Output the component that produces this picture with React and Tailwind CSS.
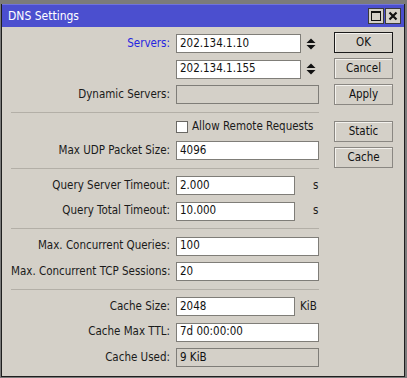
import React from "react";

const font = { fontFamily: '"DejaVu Sans Condensed", "DejaVu Sans", sans-serif' };

const Spin = () => (
   <svg width="10" height="12" viewBox="0 0 10 12" className="ml-[5px] shrink-0">
      <polygon points="0.5,5 5,0.5 9.5,5" fill="#111" />
      <polygon points="0.5,7 5,11.5 9.5,7" fill="#111" />
   </svg>
);

const Input = ({ value = "", w = "w-full", disabled = false }) => (
   <div
      className={`${w} h-[19px] border border-[#7f7d78] px-[3px] flex items-center text-[11.5px] text-[#111] leading-none ${
         disabled ? "bg-[#d4d0c8]" : "bg-white"
      }`}
   >
      {value}
   </div>
);

const Row = ({ label, blue = false, children }) => (
   <div className="grid grid-cols-[159px_1fr] gap-x-[6px] items-center h-[19px]">
      <span className={`text-right text-[11.5px] whitespace-nowrap ${blue ? "text-[#2525e0]" : "text-[#1a1a1a]"}`}>
         {label}
      </span>
      <div className="flex items-center">{children}</div>
   </div>
);

const Sep = () => <div className="h-px bg-[#b3afa7] my-[7.5px]" />;

const Button = ({ children, primary = false }) => (
   <div
      className={`h-[21px] flex items-center justify-center text-[11.5px] text-[#111] bg-[#d4d0c8] border ${
         primary ? "border-[#1a1a1a]" : "border-[#8a8782]"
      } shadow-[inset_1px_1px_0_#f4f2ee]`}
   >
      {children}
   </div>
);

export default function App() {
   return (
      <div className="w-[407px] h-[378px] bg-[#7b7b7b] pt-[4px] pl-[1px]" style={font}>
         <div className="w-[404px] h-[373px] bg-[#d4d0c8] border-l border-b border-r border-[#1e1e1e] flex flex-col">
            {/* Title bar */}
            <div className="h-[23px] bg-[#4b4fcf] flex items-center pl-[6px] pr-[3px] border-t border-[#6e72dc]">
               <span className="text-white text-[12px]">DNS Settings</span>
               <div className="ml-auto flex gap-px">
                  <div className="w-[16px] h-[16px] bg-[#d4d0c8] border border-[#3a3a3a] flex items-center justify-center">
                     <div className="w-[10px] h-[10px] border border-[#111] border-t-2" />
                  </div>
                  <div className="w-[16px] h-[16px] bg-[#d4d0c8] border border-[#3a3a3a] flex items-center justify-center">
                     <svg width="10" height="10" viewBox="0 0 10 10">
                        <path d="M1.5 1.5 L8.5 8.5 M8.5 1.5 L1.5 8.5" stroke="#111" strokeWidth="2.2" />
                     </svg>
                  </div>
               </div>
            </div>

            {/* Body */}
            <div className="flex">
               <div className="ml-[9px] w-[308px] pt-[7px] flex flex-col">
                  <div className="flex flex-col gap-[6.5px]">
                     <Row label="Servers:" blue>
                        <Input value="202.134.1.10" w="w-[125px]" />
                        <Spin />
                     </Row>
                     <Row label="">
                        <Input value="202.134.1.155" w="w-[125px]" />
                        <Spin />
                     </Row>
                     <Row label="Dynamic Servers:">
                        <Input disabled />
                     </Row>
                  </div>
                  <Sep />
                  <div className="flex flex-col gap-[7px]">
                     <div className="pl-[165px] h-[14px] flex items-center gap-[4px]">
                        <div className="w-[12px] h-[12px] bg-white border border-[#6a6864]" />
                        <span className="text-[11.5px] text-[#1a1a1a]">Allow Remote Requests</span>
                     </div>
                     <Row label="Max UDP Packet Size:">
                        <Input value="4096" />
                     </Row>
                  </div>
                  <Sep />
                  <div className="flex flex-col gap-[6.5px]">
                     <Row label="Query Server Timeout:">
                        <Input value="2.000" w="w-[119px]" />
                        <span className="ml-[18px] text-[11.5px] text-[#1a1a1a]">s</span>
                     </Row>
                     <Row label="Query Total Timeout:">
                        <Input value="10.000" w="w-[119px]" />
                        <span className="ml-[18px] text-[11.5px] text-[#1a1a1a]">s</span>
                     </Row>
                  </div>
                  <Sep />
                  <div className="flex flex-col gap-[6.5px]">
                     <Row label="Max. Concurrent Queries:">
                        <Input value="100" />
                     </Row>
                     <Row label="Max. Concurrent TCP Sessions:">
                        <Input value="20" />
                     </Row>
                  </div>
                  <Sep />
                  <div className="flex flex-col gap-[6.5px]">
                     <Row label="Cache Size:">
                        <Input value="2048" w="w-[119px]" />
                        <span className="ml-[5px] text-[11.5px] text-[#1a1a1a]">KiB</span>
                     </Row>
                     <Row label="Cache Max TTL:">
                        <Input value="7d 00:00:00" />
                     </Row>
                     <Row label="Cache Used:">
                        <Input value="9 KiB" disabled />
                     </Row>
                  </div>
               </div>

               {/* Buttons */}
               <div className="ml-[15px] w-[59px] pt-[5px] flex flex-col gap-[5px]">
                  <Button primary>OK</Button>
                  <Button>Cancel</Button>
                  <Button>Apply</Button>
                  <div className="h-[6px]" />
                  <Button>Static</Button>
                  <Button>Cache</Button>
               </div>
            </div>
         </div>
      </div>
   );
}
